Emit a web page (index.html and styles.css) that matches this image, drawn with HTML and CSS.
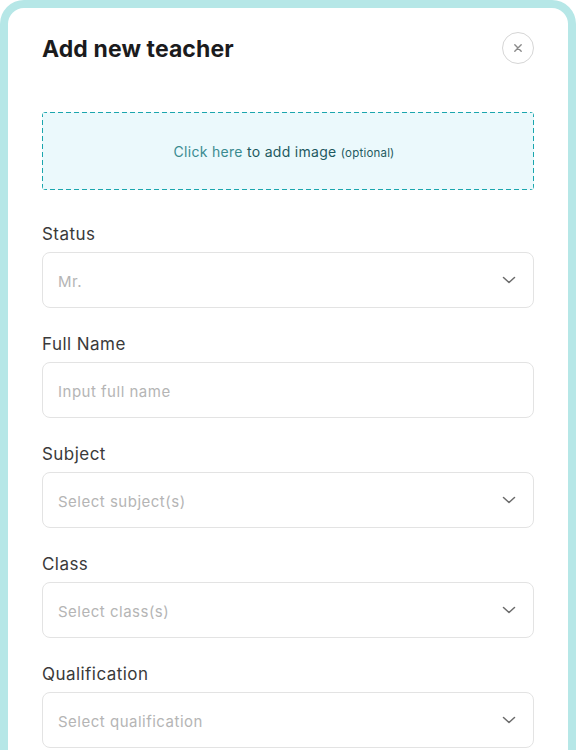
FILE: index.html
```html
<!DOCTYPE html>
<html lang="en">
<head>
<meta charset="utf-8">
<title>Add new teacher</title>
<link rel="stylesheet" href="styles.css">
</head>
<body>
<div class="frame">
  <div class="card">
    <div class="header">
      <h1 class="title">Add new teacher</h1>
      <button class="close" aria-label="Close">
        <svg width="10" height="10" viewBox="0 0 10 10"><path d="M1.8 1.8 L8.2 8.2 M8.2 1.8 L1.8 8.2" stroke="#8a8a8a" stroke-width="1.4" stroke-linecap="round" fill="none"/></svg>
      </button>
    </div>
    <div class="upload">
      <p class="upload-text"><span class="link">Click here</span> to add image <span class="opt">(optional)</span></p>
    </div>
    <div class="field">
      <label class="label">Status</label>
      <div class="input select"><span class="ph">Mr.</span><svg class="chev" width="14" height="8" viewBox="0 0 14 8"><path d="M1.5 1.5 L7 6.5 L12.5 1.5" stroke="#6b6b6b" stroke-width="1.5" fill="none" stroke-linecap="round" stroke-linejoin="round"/></svg></div>
    </div>
    <div class="field">
      <label class="label">Full Name</label>
      <div class="input"><span class="ph">Input full name</span></div>
    </div>
    <div class="field">
      <label class="label">Subject</label>
      <div class="input select"><span class="ph">Select subject(s)</span><svg class="chev" width="14" height="8" viewBox="0 0 14 8"><path d="M1.5 1.5 L7 6.5 L12.5 1.5" stroke="#6b6b6b" stroke-width="1.5" fill="none" stroke-linecap="round" stroke-linejoin="round"/></svg></div>
    </div>
    <div class="field">
      <label class="label">Class</label>
      <div class="input select"><span class="ph">Select class(s)</span><svg class="chev" width="14" height="8" viewBox="0 0 14 8"><path d="M1.5 1.5 L7 6.5 L12.5 1.5" stroke="#6b6b6b" stroke-width="1.5" fill="none" stroke-linecap="round" stroke-linejoin="round"/></svg></div>
    </div>
    <div class="field">
      <label class="label">Qualification</label>
      <div class="input select"><span class="ph">Select qualification</span><svg class="chev" width="14" height="8" viewBox="0 0 14 8"><path d="M1.5 1.5 L7 6.5 L12.5 1.5" stroke="#6b6b6b" stroke-width="1.5" fill="none" stroke-linecap="round" stroke-linejoin="round"/></svg></div>
    </div>
  </div>
</div>
</body>
</html>
```
FILE: styles.css
```css
* { box-sizing: border-box; }
html, body { margin: 0; padding: 0; background: #ffffff; }
body { font-family: Inter, "Noto Sans", sans-serif; height: 750px; overflow: hidden; }
.frame {
  background: #b6e7e7;
  border-radius: 24px;
  padding: 8px 8px 0;
  min-height: 800px;
}
.card {
  background: #ffffff;
  border-radius: 16px;
  padding: 24px 34px 40px;
  display: flex;
  flex-direction: column;
  min-height: 792px;
}
.header {
  display: flex;
  align-items: center;
  justify-content: space-between;
  height: 32px;
}
.title {
  margin: 0;
  padding-top: 2px;
  font-size: 23px;
  font-weight: 700;
  color: #1b1b1d;
  letter-spacing: 0.1px;
}
.close {
  width: 32px;
  height: 32px;
  border-radius: 50%;
  border: 1px solid #d6d6d6;
  background: #fff;
  padding: 0;
  display: flex;
  align-items: center;
  justify-content: center;
}
.upload {
  margin-top: 48px;
  height: 78px;
  border-radius: 4px;
  display: flex;
  align-items: center;
  justify-content: center;
  background:
    repeating-linear-gradient(90deg, #1aa6ae 0 5px, transparent 5px 8px) top left / 100% 1px no-repeat,
    repeating-linear-gradient(90deg, #1aa6ae 0 5px, transparent 5px 8px) bottom left / 100% 1px no-repeat,
    repeating-linear-gradient(180deg, #1aa6ae 0 5px, transparent 5px 8px) top left / 1px 100% no-repeat,
    repeating-linear-gradient(180deg, #1aa6ae 0 5px, transparent 5px 8px) top right / 1px 100% no-repeat,
    #ebf9fc;
}
.upload-text {
  margin: 0;
  padding-right: 8px;
  font-size: 14px;
  letter-spacing: 0.3px;
  color: #1e5a60;
}
.link { color: #3a8b90; }
.opt { font-size: 11.5px; letter-spacing: 0.2px; }
.field {
  display: flex;
  flex-direction: column;
  gap: 6px;
  margin-top: 32px;
}
.field + .field { margin-top: 24px; }
.label {
  font-size: 17px;
  line-height: 24px;
  color: #3a3a3a;
  font-weight: 400;
  letter-spacing: 0.45px;
}
.input {
  height: 56px;
  border: 1px solid #e3e3e3;
  border-radius: 8px;
  display: flex;
  align-items: center;
  justify-content: space-between;
  padding: 2px 17px 0 15px;
}
.ph {
  font-size: 15px;
  color: #b5b5b5;
  letter-spacing: 0.5px;
}
.chev { display: block; margin-top: -2px; }
```
